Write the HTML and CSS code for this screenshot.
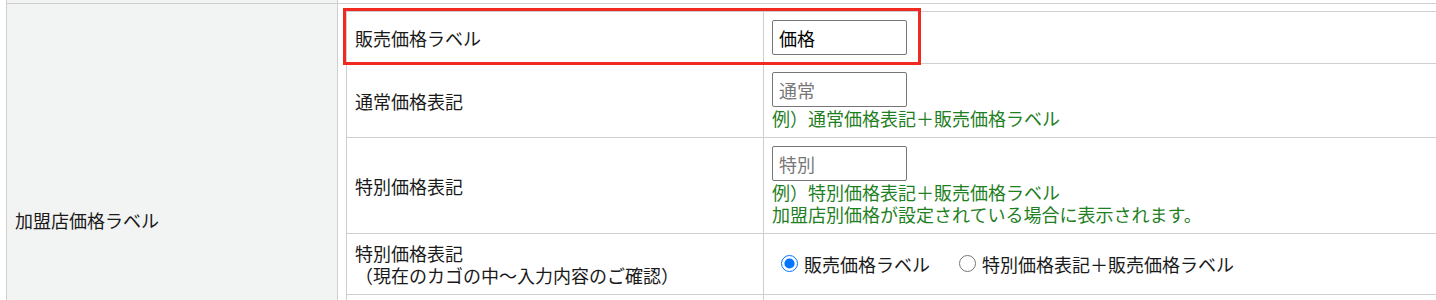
FILE: index.html
```html
<!DOCTYPE html>
<html>
  <head>
    <meta charset="utf-8">
    <title>加盟店価格ラベル設定</title>
    <link rel="stylesheet" href="styles.css">
  </head>
  <body>
    <div class="page">
      <table class="form-table">
        <tr>
          <th>加盟店価格表示</th>
          <td>表示する</td>
        </tr>
        <tr>
          <th>加盟店価格ラベル</th>
          <td class="nested">
            <div class="sub-wrap">
              <div class="highlight"></div>
              <table class="sub-table">
                <tr>
                  <th>販売価格ラベル</th>
                  <td><input class="text-input" type="text" value="価格"></td>
                </tr>
                <tr>
                  <th>通常価格表記</th>
                  <td>
                    <input class="text-input" type="text" placeholder="通常">
                    <div class="note">例）通常価格表記＋販売価格ラベル</div>
                  </td>
                </tr>
                <tr>
                  <th>特別価格表記</th>
                  <td>
                    <input class="text-input" type="text" placeholder="特別">
                    <div class="note">例）特別価格表記＋販売価格ラベル<br>加盟店別価格が設定されている場合に表示されます。</div>
                  </td>
                </tr>
                <tr>
                  <th>特別価格表記<br>（現在のカゴの中～入力内容のご確認）</th>
                  <td>
                    <label class="radio"><input type="radio" name="cart-label" checked>販売価格ラベル</label>
                    <label class="radio"><input type="radio" name="cart-label">特別価格表記＋販売価格ラベル</label>
                  </td>
                </tr>
                <tr>
                  <th>補足文</th>
                  <td><textarea class="text-area"></textarea></td>
                </tr>
              </table>
            </div>
          </td>
        </tr>
      </table>
    </div>
  </body>
</html>
```

FILE: styles.css
```css
body {
  margin: 0;
  font-family: "Noto Sans CJK JP", "Noto Sans", sans-serif;
  font-size: 18px;
  line-height: 22px;
  color: #1a1a1a;
  background: #fff;
  overflow: hidden;
}
.page {
  padding-left: 6px;
  margin-top: -36px;
}
.form-table {
  border-collapse: collapse;
  width: 1460px;
}
.form-table th, .form-table td {
  border: 1px solid #cfcfcf;
  padding: 8px;
  text-align: left;
  font-weight: normal;
  vertical-align: middle;
}
.form-table > tbody > tr > th {
  width: 314px;
  background: #f2f3f3;
}
.form-table > tbody > tr > td.nested {
  padding: 7px 0 7px 8px;
}
.sub-wrap {
  position: relative;
}
.sub-table {
  border-collapse: collapse;
  width: 100%;
}
.sub-table th {
  width: 400px;
}
.highlight {
  position: absolute;
  left: -3px;
  top: -3px;
  width: 578px;
  height: 57px;
  box-sizing: border-box;
  border: 3px solid #f02a20;
  pointer-events: none;
  z-index: 2;
}
.text-input {
  display: block;
  box-sizing: border-box;
  width: 135px;
  height: 35px;
  margin: 0;
  padding: 0 6px;
  border: 1px solid #767676;
  border-radius: 2px;
  font-family: inherit;
  font-size: 18px;
  color: #000;
}
.text-input::placeholder {
  color: #777;
}
.note {
  color: #1f801f;
}
.radio {
  display: inline-flex;
  align-items: center;
  margin-right: 16px;
}
.radio input {
  width: 17px;
  height: 17px;
  margin: 0 6px 0 9px;
}
.text-area {
  display: block;
  box-sizing: border-box;
  width: 400px;
  height: 116px;
  margin: 0;
  border: 1px solid #767676;
  border-radius: 2px;
}
```
